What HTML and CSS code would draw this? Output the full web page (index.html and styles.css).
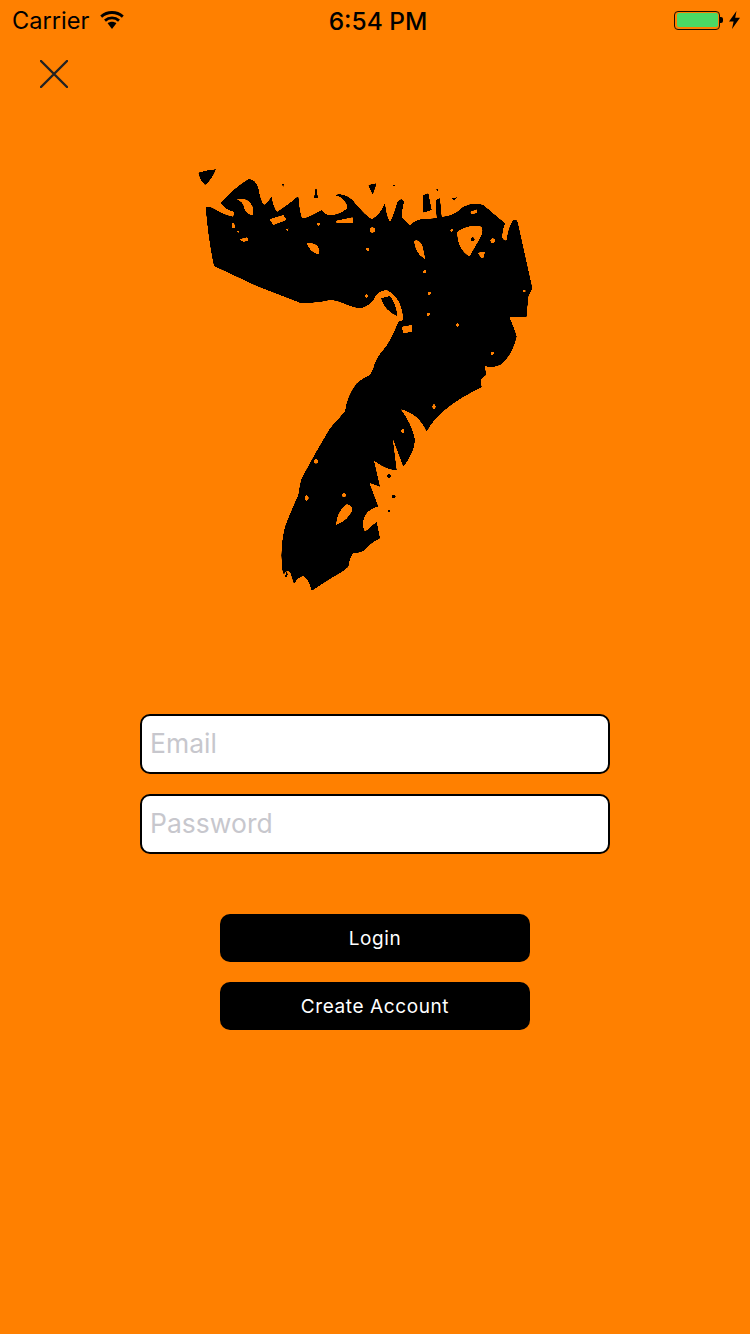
FILE: index.html
```html
<!DOCTYPE html>
<html lang="en">
<head>
<meta charset="utf-8">
<title>Login</title>
<link rel="stylesheet" href="styles.css">
</head>
<body>
<main class="screen">
  <header class="status-bar">
    <div class="status-left">
      <span class="carrier">Carrier</span>
      <svg class="wifi" viewBox="0 0 24 18" aria-hidden="true">
        <path class="wifi-arc" d="M1.2 5.6C7.4 .1 16.6 .1 22.8 5.6"/>
        <path class="wifi-arc" d="M5 9.6C9.1 6 14.9 6 19 9.6"/>
        <path class="wifi-fill" d="M7.6 12.2C10.2 10.2 13.8 10.2 16.4 12.2L12 18Z"/>
      </svg>
    </div>
    <span class="time">6:54 PM</span>
    <div class="status-right">
      <div class="battery"><div class="battery-level"></div></div>
      <div class="battery-nub"></div>
      <svg class="bolt" viewBox="0 0 11 18" aria-hidden="true">
        <path d="M7.5 0L0 10.4H4.6L3 18L11 6.8H6.2Z"/>
      </svg>
    </div>
  </header>

  <button class="close" type="button" aria-label="Close">
    <svg viewBox="0 0 28 28" aria-hidden="true"><path d="M1 1L27 27M27 1L1 27"/></svg>
  </button>

  <svg class="logo" viewBox="0 0 1110 1320" aria-hidden="true">
    <defs>
      <filter id="soften" filterUnits="userSpaceOnUse" x="0" y="0" width="1110" height="1320">
        <feGaussianBlur stdDeviation="1.5"/>
        <feComponentTransfer><feFuncA type="linear" slope="5" intercept="-2"/></feComponentTransfer>
      </filter>
    </defs>
    <path class="logo-shape" filter="url(#soften)" d="
      M47 142Q58 136 75 148Q100 165 130 170L132 155Q110 152 92 130Q130 85 175 58Q195 55 205 85Q212 125 222 135Q235 125 245 110Q250 145 262 155Q295 135 325 108Q328 150 335 172Q345 180 395 150Q410 170 430 165Q455 160 472 145Q470 115 435 105Q470 95 500 135Q525 165 545 178Q570 165 585 130Q590 175 600 185Q612 165 622 125Q635 110 642 125Q635 155 635 170Q650 190 660 195Q680 178 700 177L740 175L737 120L750 115L755 170Q790 170 820 140Q850 125 880 135Q915 165 945 190Q935 215 937 235Q945 245 950 240Q955 200 970 180Q982 175 985 195L1027 385L1015 410Q1012 440 1010 470L958 472Q975 510 980 530Q965 590 930 615Q905 625 885 618
      L888 645L872 660L875 682Q748 742 710 815Q685 760 632 748Q665 790 675 840Q672 880 640 920L608 835L620 930Q590 930 552 902L570 980L538 968L565 1040Q540 1045 530 1060Q510 1090 525 1115L560 1085L570 1135Q540 1150 525 1170Q505 1180 490 1180Q480 1190 475 1220Q460 1235 430 1250L365 1292Q355 1255 340 1248Q325 1250 312 1272L300 1235L290 1233L285 1250L278 1235Q268 1170 285 1100Q300 1060 325 1005Q330 970 335 955Q375 880 420 805Q450 770 465 755Q470 710 500 670Q525 650 540 645L550 625
      Q555 600 575 575Q600 550 625 485L640 480Q635 410 590 390Q565 390 550 420Q530 445 505 445Q480 440 460 430Q435 420 420 420Q375 432 330 428L200 378L72 318Q55 240 47 142Z
      M25 38Q50 30 78 28Q65 60 45 75Q30 60 25 38Z
      M573 415L600 408Q618 430 622 468Q585 455 573 415Z
      M276 72L281 72L280 84Z
      M378 78L384 115L372 115Z
      M535 75L560 70L548 105Z
      M608 74L616 76L612 81Z
      M738 85L746 90L742 95Z
      M786 115L802 112L792 123Z
      M700 105L715 100L725 150L700 158Z
      M140 118Q175 110 188 140L190 165Q165 165 160 135Q155 125 140 118Z
      M238 178L280 165L290 180L250 195Z
      M438 182L488 172L490 188L440 190Z
      M125 188L133 190L135 205L127 205Z
      M139 212L147 212L145 220Z
      M148 238L172 232L175 243L160 245Z
      M288 208L297 205L292 214Z
      M380 190L390 190L388 197L380 196Z
      M350 250Q378 245 388 268Q390 285 380 282Q360 275 350 250Z
      M672 242Q690 235 698 260Q705 290 705 297Q675 280 672 242Z
      M802 215Q830 195 870 198Q885 205 870 235Q850 270 838 290Q800 265 802 215Z
      M862 278L885 275L880 295L875 295Z
      M840 155L862 148L860 160L845 162Z
      M635 500L665 495L667 515L640 520Z
      M438 1095Q440 1055 470 1033Q488 1035 486 1052Q475 1080 438 1095Z
      M539 210a8 8 0 1 0 16 0a8 8 0 1 0 -16 0Z
      M528 268a5 5 0 1 0 10 0a5 5 0 1 0 -10 0Z
      M525 408a5 5 0 1 0 10 0a5 5 0 1 0 -10 0Z
      M699 335a5 5 0 1 0 10 0a5 5 0 1 0 -10 0Z
      M713 400a5 5 0 1 0 10 0a5 5 0 1 0 -10 0Z
      M710 463a5 5 0 1 0 10 0a5 5 0 1 0 -10 0Z
      M798 495a5 5 0 1 0 10 0a5 5 0 1 0 -10 0Z
      M902 580a5 5 0 1 0 10 0a5 5 0 1 0 -10 0Z
      M781 211a4 4 0 1 0 8 0a4 4 0 1 0 -8 0Z
      M999 393a4 4 0 1 0 8 0a4 4 0 1 0 -8 0Z
      M842 238a6 6 0 1 0 12 0a6 6 0 1 0 -12 0Z
      M901 242a7 7 0 1 0 14 0a7 7 0 1 0 -14 0Z
      M727 740a5 7 0 1 0 10 0a5 7 0 1 0 -10 0Z
      M633 813a5 6 0 1 0 10 0a5 6 0 1 0 -10 0Z
      M372 904a6 7 0 1 0 12 0a6 7 0 1 0 -12 0Z
      M344 1014a6 8 0 1 0 12 0a6 8 0 1 0 -12 0Z
      M456 1006a6 6 0 1 0 12 0a6 6 0 1 0 -12 0Z
      M590 948a7 5 0 1 0 14 0a7 5 0 1 0 -14 0Z
      M605 1010a6 5 0 1 0 12 0a6 5 0 1 0 -12 0Z
      M593 1053a4 4 0 1 0 8 0a4 4 0 1 0 -8 0Z
      M283 1243a5 8 0 1 0 10 0a5 8 0 1 0 -10 0Z
    "/>
  </svg>

  <form class="login-form">
    <div class="fields">
      <input class="field" type="email" placeholder="Email">
      <input class="field" type="password" placeholder="Password">
    </div>
    <div class="actions">
      <button class="action" type="button">Login</button>
      <button class="action" type="button">Create Account</button>
    </div>
  </form>
</main>
</body>
</html>
```

FILE: styles.css
```css
* {
  box-sizing: border-box;
}

html,
body {
  margin: 0;
  height: 100%;
}

body {
  background: #ff8000;
  font-family: Inter, "Liberation Sans", sans-serif;
  color: #000;
}

.screen {
  width: 750px;
  height: 1334px;
  overflow: hidden;
  display: flex;
  flex-direction: column;
  align-items: center;
}

.status-bar {
  width: 100%;
  height: 40px;
  padding: 0 10px 0 12px;
  display: grid;
  grid-template-columns: 1fr auto 1fr;
  align-items: center;
}

.status-left,
.status-right {
  display: flex;
  align-items: center;
}

.status-right {
  justify-content: flex-end;
}

.carrier {
  padding-top: 2px;
  font-size: 23.6px;
  line-height: 38px;
}

.wifi {
  width: 24px;
  height: 18px;
  margin-left: 11px;
}

.wifi-arc {
  fill: none;
  stroke: #000;
  stroke-width: 2.8;
}

.wifi-fill {
  fill: #000;
}

.time {
  margin-left: 4px;
  padding-top: 2px;
  font-size: 24.5px;
  font-weight: 500;
  line-height: 38px;
}

.battery {
  width: 46px;
  height: 19px;
  padding: 1.5px;
  border: 1px solid #1a0e00;
  border-radius: 4px;
}

.battery-level {
  height: 100%;
  background: #4cd964;
  border-radius: 2px;
}

.battery-nub {
  width: 3px;
  height: 6px;
  margin-right: 6px;
  background: #000;
  border-radius: 0 2px 2px 0;
}

.bolt {
  width: 11px;
  height: 18px;
  fill: #000;
}

.close {
  align-self: flex-start;
  width: 28px;
  height: 28px;
  margin: 20px 0 0 40px;
  padding: 0;
  border: 0;
  background: none;
  display: block;
}

.close svg {
  display: block;
  width: 28px;
  height: 28px;
}

.close path {
  fill: none;
  stroke: #222;
  stroke-width: 2.4;
  stroke-linecap: round;
}

.logo {
  display: block;
  width: 370px;
  height: 440px;
  margin-top: 72px;
  flex: none;
}

.logo-shape {
  fill: #000;
  fill-rule: evenodd;
}

.login-form {
  margin-top: 114px;
  display: flex;
  flex-direction: column;
  align-items: center;
}

.fields {
  display: flex;
  flex-direction: column;
  gap: 20px;
}

.field {
  display: block;
  width: 470px;
  height: 60px;
  padding: 0 8px 3px;
  border: 2px solid #000;
  border-radius: 10px;
  background: #fff;
  font-family: inherit;
  font-size: 26.5px;
  outline: none;
}

.field::placeholder {
  color: #c7c7cd;
  opacity: 1;
}

.actions {
  margin-top: 60px;
  display: flex;
  flex-direction: column;
  gap: 20px;
}

.action {
  display: block;
  width: 310px;
  height: 48px;
  padding: 0;
  border: 0;
  border-radius: 10px;
  background: #000;
  color: #fff;
  font-family: inherit;
  font-size: 19px;
  letter-spacing: 0.6px;
}
```
